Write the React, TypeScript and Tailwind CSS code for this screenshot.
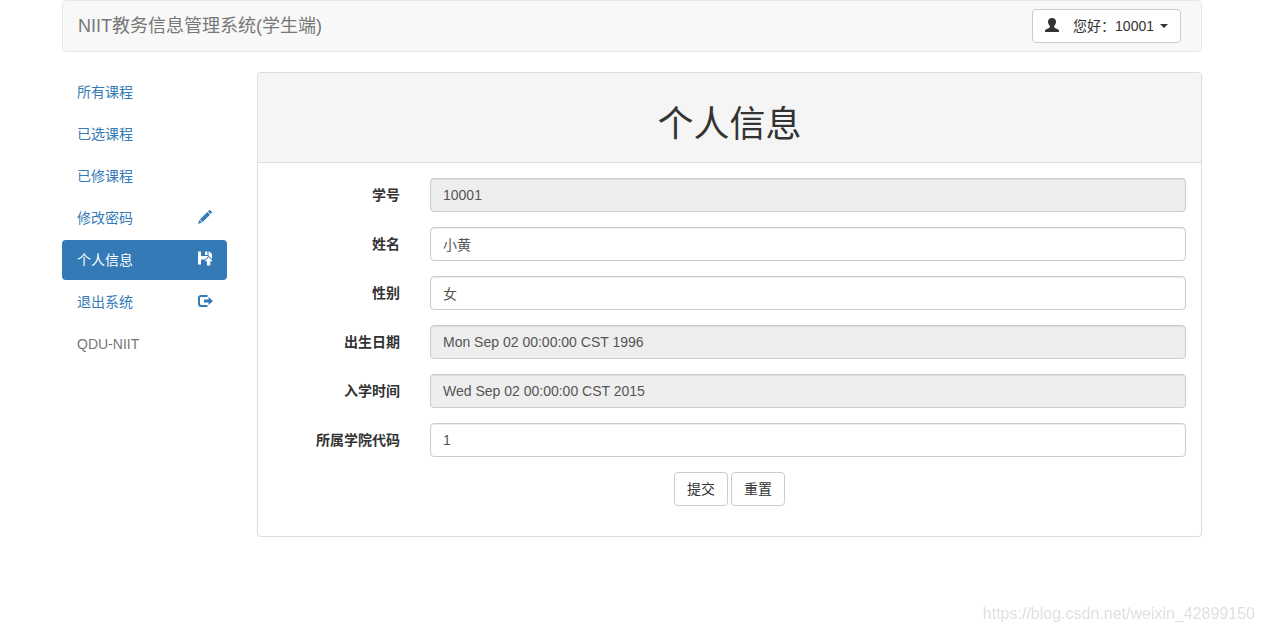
import type { ReactNode } from "react";

interface MenuItem {
  label: string;
  icon?: ReactNode;
  active?: boolean;
}

interface Field {
  id: string;
  label: string;
  value: string;
  readOnly?: boolean;
}

function UserIcon() {
  return (
    <svg viewBox="0 0 14 14" className="h-[14px] w-[14px]" fill="currentColor" aria-hidden="true">
      <path d="M7 0C4.500 0 3 1.500 3 3.800c0 1.600.7 3.200 1.800 4v1.300c0 .5-.3.800-.8 1L.9 11.500C.3 11.800 0 12.200 0 12.900V14h14v-1.100c0-.7-.3-1.100-.9-1.400L10 10.100c-.5-.2-.8-.5-.8-1V7.800c1.100-.8 1.800-2.400 1.800-4C11 1.500 9.500 0 7 0z" />
    </svg>
  );
}

function PencilIcon() {
  return (
    <svg viewBox="0 0 14 14" className="h-[14px] w-[14px]" fill="currentColor" aria-hidden="true">
      <path d="M10.900.4a1.200 1.200 0 0 1 1.600 0l1.100 1.100a1.200 1.200 0 0 1 0 1.600l-1 1-2.700-2.700zM9.300 2l2.700 2.700-7.400 7.400-2.700-2.700zM1.400 10l2.600 2.600L0 14z" />
    </svg>
  );
}

function SaveIcon() {
  return (
    <svg viewBox="0 0 15 15" className="h-[15px] w-[15px]" fill="currentColor" aria-hidden="true">
      <path d="M0 .5h3V5h7.500V.5h1L14 3v5.200l-3.300-3.500L7.200 8.500H3v5H0z" />
      <path d="M7 .5h2.500V4H7z" />
      <path d="M10.700 6l4 4.300h-2.400v4.200H9v-4.200H6.700z" />
    </svg>
  );
}

function LogoutIcon() {
  return (
    <svg viewBox="0 0 15 14" className="h-[14px] w-[15px]" fill="currentColor" aria-hidden="true">
      <path d="M3 1h6.500v2H3.200C2.500 3 2 3.500 2 4.200v5.600c0 .7.500 1.200 1.200 1.200h6.300v2H3c-1.700 0-3-1.300-3-3V4c0-1.700 1.300-3 3-3z" />
      <path d="M10.500 3L15 7l-4.500 4V8.500H6v-3h4.500z" />
    </svg>
  );
}

const MENU: MenuItem[] = [
  { label: "所有课程" },
  { label: "已选课程" },
  { label: "已修课程" },
  { label: "修改密码", icon: <PencilIcon /> },
  { label: "个人信息", icon: <SaveIcon />, active: true },
  { label: "退出系统", icon: <LogoutIcon /> },
];

const FIELDS: Field[] = [
  { id: "userid", label: "学号", value: "10001", readOnly: true },
  { id: "username", label: "姓名", value: "小黄" },
  { id: "sex", label: "性别", value: "女" },
  { id: "birthyear", label: "出生日期", value: "Mon Sep 02 00:00:00 CST 1996", readOnly: true },
  { id: "grade", label: "入学时间", value: "Wed Sep 02 00:00:00 CST 2015", readOnly: true },
  { id: "collegeid", label: "所属学院代码", value: "1" },
];

const BUTTON =
  "h-[34px] cursor-pointer rounded border border-[#ccc] bg-white px-3 text-[#333] hover:bg-[#e6e6e6]";

function Navbar() {
  return (
    <header className="mb-5 flex h-[52px] items-center justify-between rounded border border-[#e7e7e7] bg-[#f8f8f8] pr-5 pl-[15px]">
      <a href="#" className="text-[18px] leading-5 text-[#777]">
        NIIT教务信息管理系统(学生端)
      </a>
      <button type="button" className={`${BUTTON} flex items-center`}>
        <span className="pb-0.5">
          <UserIcon />
        </span>
        <span className="ml-3.5">您好：10001</span>
        <span className="ml-1.5 border-x-4 border-t-4 border-x-transparent border-t-[#333]" />
      </button>
    </header>
  );
}

function Sidebar() {
  return (
    <nav className="w-[165px] shrink-0">
      <ul className="flex flex-col gap-0.5">
        {MENU.map((item) => (
          <li key={item.label}>
            <a
              href="#"
              className={`flex h-10 items-center justify-between rounded pr-3.5 pl-[15px] ${
                item.active ? "bg-[#337ab7] text-white" : "text-[#337ab7] hover:bg-[#eee]"
              }`}
            >
              {item.label}
              <span className="flex w-[15px] pb-[3px]">{item.icon}</span>
            </a>
          </li>
        ))}
        <li className="flex h-10 items-center pl-[15px] text-[#777]">QDU-NIIT</li>
      </ul>
    </nav>
  );
}

function ProfileForm() {
  return (
    <form className="flex flex-col gap-[15px] px-[15px] pt-[15px] pb-[30px]">
      {FIELDS.map((field) => (
        <div key={field.id} className="flex items-center">
          <label htmlFor={field.id} className="w-[157px] shrink-0 pr-[30px] text-right font-bold">
            {field.label}
          </label>
          <input
            id={field.id}
            type="text"
            defaultValue={field.value}
            readOnly={field.readOnly}
            className="h-[34px] min-w-0 flex-1 rounded border border-[#ccc] bg-white px-3 text-[#555] shadow-[inset_0_1px_1px_rgba(0,0,0,0.075)] read-only:bg-[#eee]"
          />
        </div>
      ))}
      <div className="flex justify-center gap-[3px]">
        <button type="submit" className={BUTTON}>
          提交
        </button>
        <button type="reset" className={BUTTON}>
          重置
        </button>
      </div>
    </form>
  );
}

export default function App() {
  return (
    <div className="font-['Liberation_Sans','Noto_Sans_CJK_SC',sans-serif] text-sm leading-5 text-[#333]">
      <div className="mx-auto max-w-[1170px] px-[15px]">
        <Navbar />
        <div className="flex items-start gap-[30px]">
          <Sidebar />
          <main className="min-w-0 flex-1 rounded border border-[#ddd] bg-white shadow-[0_1px_1px_rgba(0,0,0,0.05)]">
            <div className="rounded-t-[3px] border-b border-[#ddd] bg-[#f5f5f5] px-[15px] pt-8 pb-[18px]">
              <h1 className="text-center text-4xl leading-[39px]">个人信息</h1>
            </div>
            <ProfileForm />
          </main>
        </div>
      </div>
      <p className="fixed right-[9px] bottom-2 text-base leading-5 text-[#e0e0e0]">
        https://blog.csdn.net/weixin_42899150
      </p>
    </div>
  );
}
